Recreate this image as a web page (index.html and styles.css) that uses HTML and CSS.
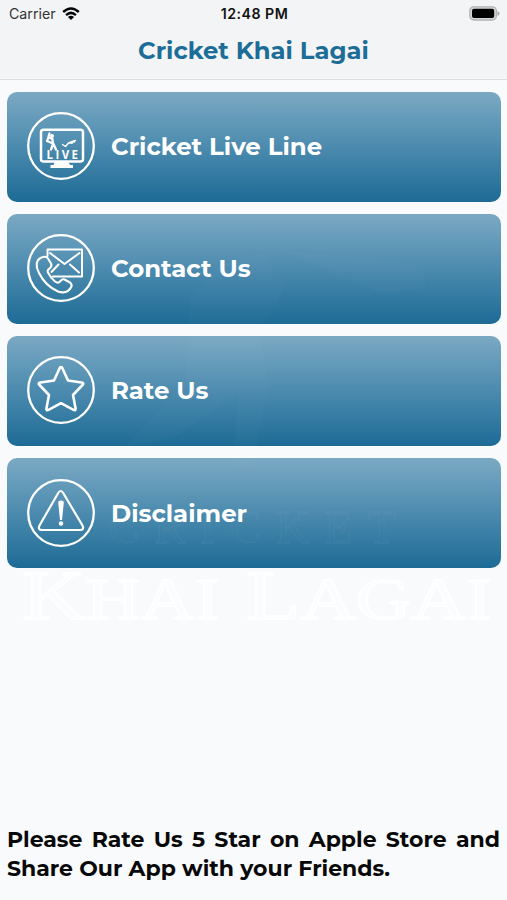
FILE: index.html
```html
<!DOCTYPE html>
<html lang="en">
<head>
<meta charset="utf-8">
<meta name="viewport" content="width=device-width, initial-scale=1">
<title>Cricket Khai Lagai</title>
<link rel="stylesheet" href="styles.css">
</head>
<body>
<div class="screen">
  <header class="header">
    <div class="status">
      <div class="carrier"><span>Carrier</span>
        <svg width="18" height="14" viewBox="0 0 20 15" preserveAspectRatio="none" fill="none" stroke="#050505" stroke-width="2.7"><path d="M1.3 5.4Q10-2.100 18.700 5.400M4.500 8.700Q10 3.900 15.500 8.700"/><path d="M6.600 10.700Q10 7.900 13.400 10.700L10 14Z" fill="#050505" stroke="none"/></svg>
      </div>
      <time class="clock">12:48 PM</time>
      <svg class="battery" width="31" height="15" viewBox="0 0 31 15"><rect x=".8" y=".8" width="26.600" height="13.200" rx="4" fill="#d5d6d7" stroke="#b2b3b4" stroke-width="1.300"/><rect x="3" y="2.800" width="22.200" height="9.200" rx="2" fill="#000"/><path d="M28.500 5v5q2-1 2-2.500t-2-2.500" fill="#a5a6a7"/></svg>
    </div>
    <h1 class="title">Cricket Khai Lagai</h1>
  </header>
  <main class="menu">
    <a class="card">
      <svg class="icon" viewBox="0 0 68 68"><circle cx="34" cy="34" r="32.800"/><rect x="14" y="17.800" width="42" height="31.600" rx="2.500" stroke-width="2.500"/><path class="solid" d="M28 49h13l2 4h3v3H23.500V53h3z"/><path d="M23 26l2.500 1 .5 5-2 5.500M26 31l3 6.500M20.500 28l2-6.500M20 29l5 2" stroke-width="2.300"/><circle class="solid" cx="25" cy="24" r="2"/><path d="M35.500 32.500l3 2 3-3.500 4-1.500 3-1M41.500 31l4 0" stroke-width="1.400"/><circle class="solid" cx="47" cy="29.500" r="1.200"/><text class="live" x="19.500" y="47" textLength="31.500">LIVE</text></svg>
      <span class="label">Cricket Live Line</span>
    </a>
    <a class="card">
      <svg class="icon" viewBox="0 0 68 68"><circle cx="34" cy="34" r="32.800"/><path d="M20.500 22V15.500H55V42.500H26M23 19L37.500 30L52.500 19M31.500 30.500L24.500 38M43 30.500L52 38.500" stroke-width="2"/><path d="M14.500 23.500C8.500 26 8.500 33 12 39C16 47 23 54 31 57.500C37 59.500 42 57.500 44.500 52.500Q45 50 43 48.500L37.500 45.500Q35.500 44.500 33.500 47Q31.500 50 28 47.500Q24 44 21.500 39.500Q19.500 36.500 22 35L23.500 33.500Q25 32 24 29.500L21 24.500Q19 21.500 14.500 23.500Z" stroke-width="2.100"/></svg>
      <span class="label">Contact Us</span>
    </a>
    <a class="card">
      <svg class="icon" viewBox="0 0 68 68"><circle cx="34" cy="34" r="32.800"/><path d="M34 11q1 0 1.500 1.500l5.500 12 13.500 2q3 .5 1 2.500L46 39l2.500 13q.5 3-2 1.800L34 47.200l-12.500 6.600q-2.500 1.200-2-1.800L22 39l-9.500-10q-2-2 1-2.500l13.500-2 5.500-12Q33 11 34 11z" stroke-width="2.600"/></svg>
      <span class="label">Rate Us</span>
    </a>
    <a class="card">
      <svg class="icon" viewBox="0 0 68 68"><circle cx="34" cy="34" r="32.800"/><path d="M31.200 14Q33.700 10 36.200 14L55.500 46.500Q57.500 51 53 51H15Q10.500 51 12.500 46.500Z" stroke-width="2.200"/><path class="solid" d="M31.200 23.500q0-2 2.800-2t2.800 2L35 41h-2z"/><circle class="solid" cx="34" cy="44.500" r="2.200"/></svg>
      <span class="label">Disclaimer</span>
    </a>
    <svg class="watermark" viewBox="0 0 507 900" aria-hidden="true">
      <text class="mark-small" x="108" y="543" textLength="288">CRICKET</text>
      <text class="mark-large" x="22" y="619" textLength="198" lengthAdjust="spacingAndGlyphs">K<tspan class="caps">HAI</tspan></text>
      <text class="mark-large" x="246" y="619" textLength="246" lengthAdjust="spacingAndGlyphs">L<tspan class="caps">AGAI</tspan></text>
      <path class="player" d="M190 300l30-35 45-12 20 35-25 40 8 60-15 80h-20l5-75-65 45-50 10 62-65zM280 250l100 43 45-5V265"/>
    </svg>
  </main>
  <footer class="note"><p class="first">Please Rate Us 5 Star on Apple Store and</p><p>Share Our App with your Friends.</p></footer>
</div>
</body>
</html>
```
FILE: styles.css
```css
* { box-sizing: border-box; }
body { margin: 0; background: #f9fafc; font-family: Montserrat, Inter, sans-serif; }
.screen { height: 900px; display: flex; flex-direction: column; }
.header { height: 80px; background: #f3f4f6; border-bottom: 1.500px solid #dddfe1; }
.status { height: 27px; padding: 0 7px 0 9px; display: grid; grid-template-columns: 1fr auto 1fr; align-items: center; font-family: Inter, sans-serif; font-size: 14.200px; color: #111; }
.carrier { display: flex; align-items: center; gap: 6px; color: #333; }
.clock { font-weight: 600; letter-spacing: .5px; }
.battery { justify-self: end; }
.title { margin: 8px 0 0; text-align: center; font-size: 24.300px; line-height: 30px; font-weight: 700; color: #1c6d97; }
.menu { padding: 11.500px 6.500px 0 7px; display: grid; gap: 12.200px; grid-auto-rows: 110px; }
.card { display: flex; align-items: center; gap: 16px; padding: 0 20px; border-radius: 10px; background: linear-gradient(#7ba9c3, #5591b3 40%, #1d6b96); }
.icon { width: 68px; height: 68px; margin-top: -1px; fill: none; stroke: #fff; stroke-width: 2.300; stroke-linejoin: round; stroke-linecap: round; }
.solid { fill: #fff; stroke: none; }
.live { font: 700 11.500px "Open Sans", sans-serif; fill: #fff; stroke: none; }
.label { margin-top: -1px; color: #fff; font-size: 24.400px; font-weight: 700; white-space: nowrap; }
.watermark { position: absolute; left: 0; top: 0; width: 507px; height: 900px; pointer-events: none; font-family: "Liberation Serif", serif; }
.mark-small { font-size: 47px; fill: none; stroke: #fff; stroke-opacity: .06; }
.mark-large { font-size: 70px; fill: #fff; fill-opacity: .4; stroke: #fff; stroke-width: 1.500; }
.caps { font-size: 60px; }
.player { fill: #fff; fill-opacity: .015; }
.note { margin-top: auto; padding: 0 7px 17px; color: #080808; font-size: 22px; line-height: 29px; font-weight: 700; white-space: nowrap; }
.note p { margin: 0; }
.note .first { white-space: normal; text-align: justify; text-align-last: justify; }
```
